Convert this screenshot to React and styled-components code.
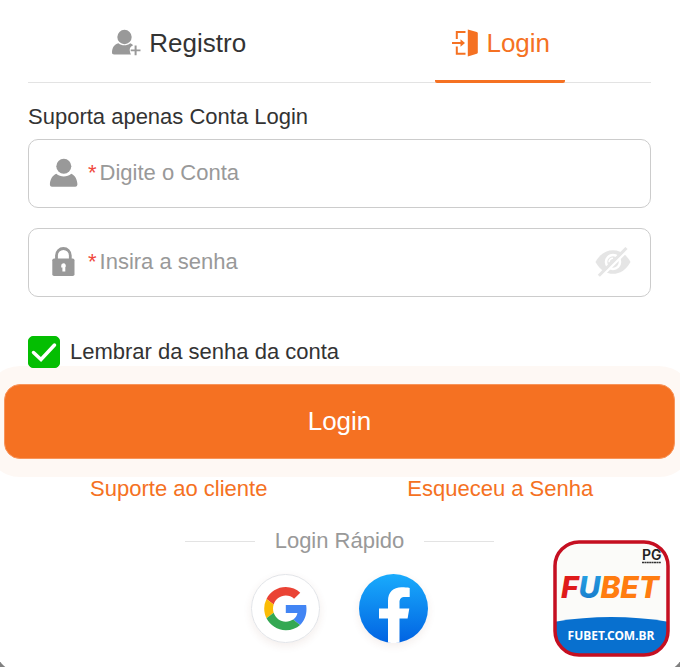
import { useState } from 'react';
import styled, { createGlobalStyle } from 'styled-components';

const orange = '#f57122';

const GlobalStyle = createGlobalStyle`
  * {
    box-sizing: border-box;
  }

  body {
    margin: 0;
    background: #808080;
    font-family: 'Liberation Sans', Arial, sans-serif;
    font-size: 22px;
    line-height: 30px;
    color: #333;
  }

  button, input {
    font: inherit;
    color: inherit;
  }
`;

const Page = styled.div`
  position: relative;
  min-height: 100vh;
  display: flex;
  flex-direction: column;
  overflow: hidden;
`;

const Card = styled.main`
  flex: 1;
  margin: 0 -4px -5px;
  padding: 0 33px 24px 32px;
  background: #fff;
  border-radius: 0 0 24px 24px;
`;

const Tabs = styled.div`
  display: grid;
  grid-template-columns: 1fr 1fr;
  column-gap: 20px;
  justify-items: center;
  border-bottom: 1px solid #e3e3e3;
`;

const Tab = styled.button`
  display: flex;
  align-items: center;
  justify-content: center;
  gap: 8px;
  width: 130px;
  height: 83px;
  margin-bottom: -1px;
  padding: 6px 0 0;
  border: 0;
  border-bottom: 3px solid ${(p) => (p.$active ? orange : 'transparent')};
  border-radius: 2px;
  background: none;
  font-size: 26px;
  white-space: nowrap;
  color: ${(p) => (p.$active ? orange : '#333')};
  cursor: pointer;

  svg {
    flex: none;
  }
`;

const Hint = styled.p`
  margin: 0;
  padding: 19px 0 7px;
`;

const Fields = styled.div`
  display: grid;
  gap: 20px;
`;

const Field = styled.label`
  display: flex;
  align-items: center;
  height: 69px;
  padding: 0 19px 2px 20px;
  border: 1px solid #ccc;
  border-radius: 10px;

  > svg {
    flex: none;
  }
`;

const Star = styled.span`
  margin: 0 3px 0 10px;
  color: #f0483e;
`;

const TextInput = styled.input`
  flex: 1;
  min-width: 0;
  padding: 0;
  border: 0;
  outline: 0;
  background: none;

  &::placeholder {
    color: #999;
    opacity: 1;
  }
`;

const EyeButton = styled.button`
  display: flex;
  padding: 0;
  border: 0;
  background: none;
  cursor: pointer;
`;

const Remember = styled.label`
  position: relative;
  z-index: 1;
  display: flex;
  align-items: center;
  gap: 10px;
  margin-top: 39px;
`;

const Check = styled.span`
  display: grid;

  input, svg {
    grid-area: 1 / 1;
    width: 32px;
    height: 32px;
    margin: 0;
  }

  input {
    appearance: none;
    border: 1px solid #04be02;
    border-radius: 5px;
  }

  input:checked {
    background: #04be02;
  }

  svg {
    pointer-events: none;
  }
`;

const Submit = styled.button`
  display: block;
  width: calc(100% + 48px);
  height: 75px;
  margin: 16px -24px 0;
  padding: 0 0 2px;
  border: 1px solid #f8945a;
  border-radius: 16px;
  background: ${orange};
  box-shadow: 0 0 0 18px #fef8f4;
  color: #fff;
  font-size: 26px;
  cursor: pointer;
`;

const Links = styled.div`
  position: relative;
  display: grid;
  grid-template-columns: 1fr 1fr;
  column-gap: 20px;
  justify-items: center;
  margin-top: 15px;

  a {
    color: ${orange};
    text-decoration: none;
  }
`;

const Quick = styled.div`
  display: flex;
  align-items: center;
  justify-content: center;
  gap: 20px;
  margin-top: 22px;
  color: #999;

  &::before, &::after {
    content: '';
    width: 70px;
    height: 1px;
    background: #e3e3e3;
  }
`;

const Socials = styled.div`
  display: flex;
  justify-content: center;
  gap: 39px;
  margin-top: 18px;
`;

const Social = styled.button`
  display: flex;
  width: 69px;
  height: 69px;
  padding: 0;
  border: 0;
  border-radius: 50%;
  background: #fff;
  box-shadow: 0 3px 8px rgba(120, 60, 30, 0.09);
  cursor: pointer;
`;

// floats over the bottom right corner of the card
const Badge = styled.a`
  position: absolute;
  right: 10px;
  bottom: 10px;
  display: block;
  width: 117px;
  height: 117px;

  svg {
    display: block;
  }
`;

const RegisterIcon = () => (
  <svg width="30" height="28" viewBox="0 0 30 28" fill="#999">
    <circle cx="13.500" cy="8" r="7.200" />
    <path d="M7.500 14.200c3.200 2.700 8.500 2.700 11.700 0 1.500.6 2.300 1.200 3 2.100-2 .8-3.500 2.400-3.500 4.500 0 1.800.6 3.400 1.300 4.700H3.200C1.700 25.500.9 24.700 1 23.300c.2-4.500 2-8 6.500-9.100z" />
    <path d="M23.600 16.500h2v3.900h3.900v1.900h-3.900v3.900h-2v-3.900h-3.900v-1.900h3.900z" />
  </svg>
);

const DoorIcon = () => (
  <svg width="28" height="30" viewBox="-2 0 28 30">
    <path d="M15.800 1.400 24.800 4c.7.2 1 .6 1 1.200v19.400c0 .6-.3 1-1 1.200l-9 2.800z" fill={orange} />
    <path d="M13.500 4H4.800v7M13.500 25.700H4.800v-7.200M0 15h9" fill="none" stroke={orange} strokeWidth="2" />
    <path d="M8.500 11.300 13 15l-4.500 3.700z" fill={orange} />
  </svg>
);

const UserIcon = () => (
  <svg width="29" height="30" viewBox="0 0 29 30" fill="#999">
    <circle cx="14.800" cy="8.200" r="7.500" />
    <path d="M7.300 15.800c4.200 3.700 10.800 3.700 15 0 3.900 1.800 5.800 5.700 6.100 10.300.1 1.600-.7 2.600-2.200 2.600H3c-1.500 0-2.200-1-2.100-2.600.3-4.600 2.400-8.500 6.400-10.300z" />
  </svg>
);

const LockIcon = () => (
  <svg width="29" height="30" viewBox="0 0 29 30">
    <path d="M7.500 13V8.500a6.900 7 0 0 1 13.800 0V13" fill="none" stroke="#999" strokeWidth="2.800" />
    <rect x="3.300" y="11.500" width="22.200" height="17.500" rx="1.800" fill="#999" />
    <path d="M14.400 16.200a2.500 2.500 0 0 1 1.900 4.100v4.200h-2.900v-4h-1.200v-1.800a2.400 2.400 0 0 1 2.200-2.500z" fill="#fff" />
  </svg>
);

const EyeOffIcon = () => (
  <svg width="36" height="30" viewBox="0 0 36 30">
    <path d="M.5 15C5 6.900 11 3.300 18 3.300S31 6.900 35.500 15C31 23.200 25 26.800 18 26.800S5 23.200.5 15z" fill="#e5e5e5" />
    <circle cx="18" cy="15" r="7" fill="none" stroke="#fff" strokeWidth="2.500" />
    <path d="M18 11.200a4 4 0 0 0-4 4" fill="none" stroke="#fff" strokeWidth="1.500" />
    <path d="M5.500 30.500 33.500 2.500" stroke="#fff" strokeWidth="2.500" />
    <path d="M3.800 28.800 31.500 1" stroke="#e5e5e5" strokeWidth="3" />
  </svg>
);

const GoogleIcon = () => (
  <svg width="69" height="69" viewBox="0 0 69 69">
    <circle cx="34.500" cy="34.500" r="34" fill="#fff" stroke="#e2e4e8" />
    <g transform="translate(13.200 13) scale(.9)">
      <path fill="#ea4335" d="M24 9.500c3.540 0 6.710 1.220 9.210 3.600l6.850-6.850C35.900 2.380 30.470 0 24 0 14.620 0 6.510 5.380 2.560 13.220l7.980 6.190C12.430 13.720 17.740 9.500 24 9.500z" />
      <path fill="#4285f4" d="M46.980 24.550c0-1.570-.15-3.090-.38-4.550H24v9.020h12.940c-.58 2.960-2.260 5.480-4.780 7.180l7.730 6c4.510-4.180 7.090-10.360 7.090-17.650z" />
      <path fill="#fbbc05" d="M10.530 28.590A14.500 14.500 0 0 1 9.770 24c0-1.600.27-3.140.76-4.590l-7.980-6.190A23.900 23.900 0 0 0 0 24c0 3.880.92 7.540 2.560 10.780z" />
      <path fill="#34a853" d="M24 48c6.480 0 11.930-2.130 15.890-5.810l-7.730-6c-2.150 1.450-4.920 2.300-8.160 2.300-6.260 0-11.570-4.220-13.470-9.910l-7.980 6.190C6.510 42.620 14.620 48 24 48z" />
    </g>
  </svg>
);

const FacebookIcon = () => (
  <svg width="69" height="69" viewBox="0 0 69 69">
    <defs>
      <linearGradient id="fb" x1="0" y1="0" x2="0" y2="1">
        <stop offset="0" stopColor="#19abfc" />
        <stop offset="1" stopColor="#0163e2" />
      </linearGradient>
    </defs>
    <circle cx="34.500" cy="34.500" r="34.500" fill="url(#fb)" />
    <path d="M29 68.600V44.500h-9v-10h9V27c0-9 5.300-13.700 13.500-13.700 3.200 0 5.800.2 8.200.6v9h-4.500c-4.400 0-5.700 2-5.700 5.500v6.100h9.800l-1.700 10h-8.100v24c-3.700.7-7.700.8-11.500.1z" fill="#fff" />
  </svg>
);

const BadgeArt = () => (
  <svg width="117" height="117" viewBox="0 0 117 117">
    <defs>
      <clipPath id="frame">
        <rect x="2" y="2" width="113" height="113" rx="24" />
      </clipPath>
      <linearGradient id="u" x1="0" y1="0" x2="1" y2="1">
        <stop offset="0" stopColor="#2cb4f0" />
        <stop offset="1" stopColor="#0a52b0" />
      </linearGradient>
    </defs>
    <g clipPath="url(#frame)">
      <rect width="117" height="117" fill="#fbfbf9" />
      <path d="M0 82Q58 72 117 82V117H0z" fill="#0870cf" />
    </g>
    <rect x="2" y="2" width="113" height="113" rx="24" fill="none" stroke="#c50f21" strokeWidth="3.500" />
    <text x="89" y="20" fontFamily="Inter, sans-serif" fontWeight="600" fontSize="14" fill="#222">PG</text>
    <path d="M89 22.500h19" stroke="#333" strokeWidth="1.500" strokeDasharray="2 .4" />
    <text x="8" y="58" fontFamily="Inter, sans-serif" fontWeight="800" fontStyle="italic" fontSize="30">
      <tspan fill="#df1b1b">F</tspan>
      <tspan fill="url(#u)">U</tspan>
      <tspan fill="#ff7c10">BET</tspan>
    </text>
    <text x="58" y="100" textAnchor="middle" fontFamily="'Noto Sans', sans-serif" fontWeight="700" fontSize="12" fill="#fff">FUBET.COM.BR</text>
  </svg>
);

const App = () => {
  const [tab, setTab] = useState('login');
  const [show, setShow] = useState(false);

  return (
    <Page>
      <GlobalStyle />
      <Card>
        <Tabs role="tablist">
          <Tab type="button" role="tab" aria-selected={tab === 'register'} $active={tab === 'register'} onClick={() => setTab('register')}>
            <RegisterIcon />
            Registro
          </Tab>
          <Tab type="button" role="tab" aria-selected={tab === 'login'} $active={tab === 'login'} onClick={() => setTab('login')}>
            <DoorIcon />
            Login
          </Tab>
        </Tabs>
        <form onSubmit={(e) => e.preventDefault()}>
          <Hint>Suporta apenas Conta Login</Hint>
          <Fields>
            <Field>
              <UserIcon />
              <Star>*</Star>
              <TextInput type="text" aria-label="Conta" placeholder="Digite o Conta" />
            </Field>
            <Field>
              <LockIcon />
              <Star>*</Star>
              <TextInput type={show ? 'text' : 'password'} aria-label="Senha" placeholder="Insira a senha" />
              <EyeButton type="button" aria-label="Mostrar senha" onClick={() => setShow(!show)}>
                <EyeOffIcon />
              </EyeButton>
            </Field>
          </Fields>
          <Remember>
            <Check>
              <input type="checkbox" defaultChecked />
              <svg viewBox="0 0 32 32">
                <path d="M5.500 16.500 13 23.500 26.500 9" fill="none" stroke="#fff" strokeWidth="3.500" strokeLinecap="round" />
              </svg>
            </Check>
            Lembrar da senha da conta
          </Remember>
          <Submit type="submit">Login</Submit>
        </form>
        <Links>
          <a href="#suporte">Suporte ao cliente</a>
          <a href="#senha">Esqueceu a Senha</a>
        </Links>
        <Quick>Login Rápido</Quick>
        <Socials>
          <Social type="button" aria-label="Google">
            <GoogleIcon />
          </Social>
          <Social type="button" aria-label="Facebook">
            <FacebookIcon />
          </Social>
        </Socials>
      </Card>
      <Badge href="#fubet" aria-label="FUBET.COM.BR">
        <BadgeArt />
      </Badge>
    </Page>
  );
};

export default App;
